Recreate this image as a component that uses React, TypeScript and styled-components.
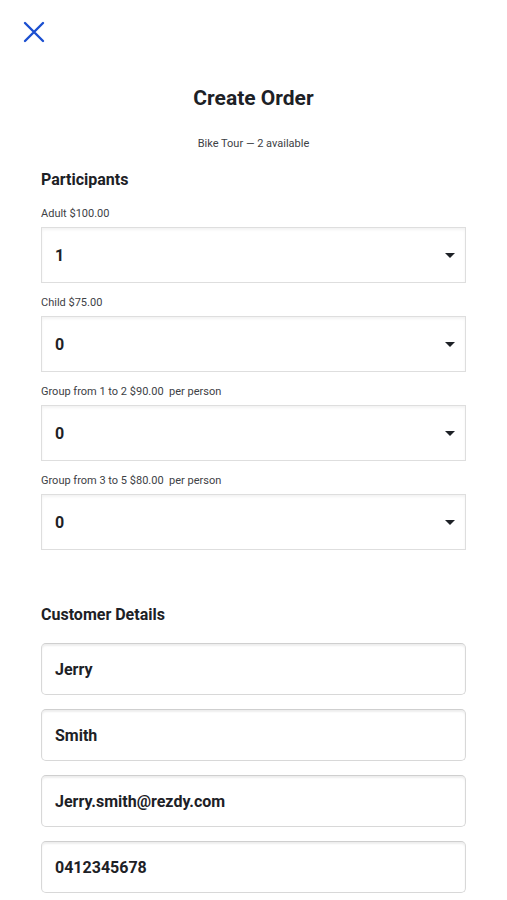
import React from 'react';
import styled, { createGlobalStyle } from 'styled-components';

const GlobalStyle = createGlobalStyle`
  html, body {
    margin: 0;
    padding: 0;
    background: #ffffff;
  }
  body {
    font-family: Roboto, "Noto Sans", Arial, sans-serif;
    color: #1d2126;
  }
`;

/**
 * Page wrapper
 */
const Page = styled.div`
  width: 507px;
  min-height: 900px;
  background: #ffffff;
`;

/**
 * Top bar with the close button
 */
const TopBar = styled.div`
  padding: 21px 0 0 23px;
  height: 24px;
`;

const CloseButton = styled.button`
  border: none;
  background: none;
  padding: 0;
  width: 22px;
  height: 22px;
  display: block;
  cursor: pointer;
`;

const Header = styled.div`
  display: flex;
  flex-direction: column;
  align-items: center;
  padding-top: 41px;
`;

const Title = styled.h1`
  margin: 0;
  font-size: 21px;
  line-height: 24px;
  font-weight: 700;
  color: #1d2126;
`;

const Subtitle = styled.div`
  margin-top: 27px;
  font-size: 11px;
  line-height: 14px;
  color: #3d4145;
`;

const Form = styled.div`
  padding: 0 41px;
`;

const SectionTitle = styled.h2<{ $top: number }>`
  margin: ${(p) => p.$top}px 0 0 0;
  font-size: 16px;
  line-height: 20px;
  font-weight: 700;
  color: #1d2126;
`;

const FieldGroup = styled.div`
  display: flex;
  flex-direction: column;
  margin-top: 13px;
  &:first-of-type {
    margin-top: 17px;
  }
`;

const FieldLabel = styled.label`
  font-size: 11px;
  line-height: 14px;
  color: #3d4145;
  margin-bottom: 6px;
  white-space: pre;
`;

const SelectBox = styled.div`
  position: relative;
  box-sizing: border-box;
  height: 56px;
  border: 1px solid #dedede;
  box-shadow: inset 0 2px 3px rgba(0, 0, 0, 0.05);
  display: flex;
  align-items: center;
  padding: 0 10px 0 13px;
  background: #ffffff;
`;

const SelectValue = styled.span`
  flex: 1;
  font-size: 16px;
  font-weight: 700;
  color: #1d2126;
`;

const Caret = styled.span`
  width: 0;
  height: 0;
  border-left: 5px solid transparent;
  border-right: 5px solid transparent;
  border-top: 5px solid #1d2126;
`;

const InputList = styled.div`
  display: flex;
  flex-direction: column;
  gap: 14px;
  margin-top: 18px;
`;

const TextInput = styled.div`
  box-sizing: border-box;
  height: 52px;
  border: 1px solid #d8d8d8;
  border-top-color: #cfcfcf;
  border-radius: 5px;
  box-shadow: inset 0 2px 2px rgba(0, 0, 0, 0.07);
  display: flex;
  align-items: center;
  padding: 0 13px;
  font-size: 16px;
  font-weight: 700;
  color: #1d2126;
`;

const participants = [
  { label: 'Adult $100.00', value: '1' },
  { label: 'Child $75.00', value: '0' },
  { label: 'Group from 1 to 2 $90.00  per person', value: '0' },
  { label: 'Group from 3 to 5 $80.00  per person', value: '0' },
];

const customer = ['Jerry', 'Smith', 'Jerry.smith@rezdy.com', '0412345678'];

const App: React.FC = () => {
  return (
    <Page>
      <GlobalStyle />
      <TopBar>
        <CloseButton aria-label="Close">
          <svg width="22" height="22" viewBox="0 0 22 22">
            <path
              d="M2 2 L20 20 M20 2 L2 20"
              stroke="#1b4fd0"
              strokeWidth="2.4"
              strokeLinecap="round"
            />
          </svg>
        </CloseButton>
      </TopBar>

      <Header>
        <Title>Create Order</Title>
        <Subtitle>Bike Tour — 2 available</Subtitle>
      </Header>

      <Form>
        <SectionTitle $top={19}>Participants</SectionTitle>
        {participants.map((p) => (
          <FieldGroup key={p.label}>
            <FieldLabel>{p.label}</FieldLabel>
            <SelectBox>
              <SelectValue>{p.value}</SelectValue>
              <Caret />
            </SelectBox>
          </FieldGroup>
        ))}

        <SectionTitle $top={55}>Customer Details</SectionTitle>
        <InputList>
          {customer.map((c) => (
            <TextInput key={c}>{c}</TextInput>
          ))}
        </InputList>
      </Form>
    </Page>
  );
};

export default App;
